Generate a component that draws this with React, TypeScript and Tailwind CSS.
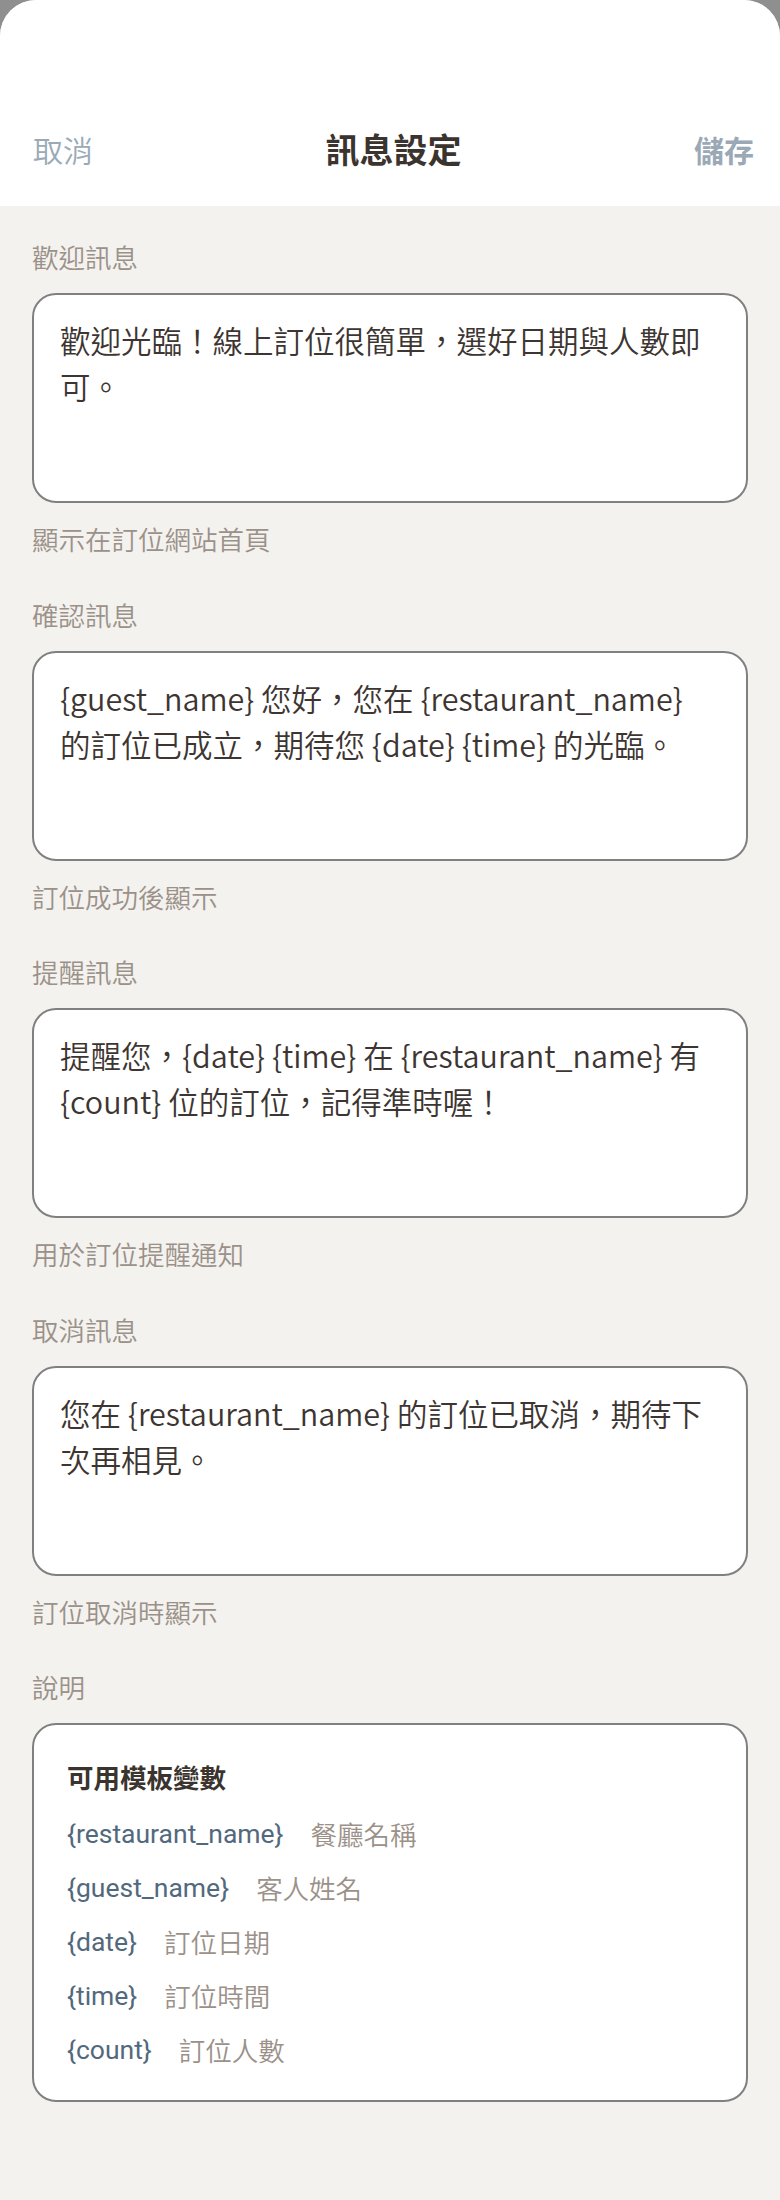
import React from 'react';

const cjk = "font-['Noto_Sans_CJK_TC','Noto_Sans_CJK_SC',sans-serif]";

type Section = {
  label: string;
  text: string;
  hint: string;
};

const sections: Section[] = [
  {
    label: '歡迎訊息',
    text: '歡迎光臨！線上訂位很簡單，選好日期與人數即可。',
    hint: '顯示在訂位網站首頁',
  },
  {
    label: '確認訊息',
    text: '{guest_name} 您好，您在 {restaurant_name} 的訂位已成立，期待您 {date} {time} 的光臨。',
    hint: '訂位成功後顯示',
  },
  {
    label: '提醒訊息',
    text: '提醒您，{date} {time} 在 {restaurant_name} 有 {count} 位的訂位，記得準時喔！',
    hint: '用於訂位提醒通知',
  },
  {
    label: '取消訊息',
    text: '您在 {restaurant_name} 的訂位已取消，期待下次再相見。',
    hint: '訂位取消時顯示',
  },
];

const variables = [
  { key: '{restaurant_name}', desc: '餐廳名稱' },
  { key: '{guest_name}', desc: '客人姓名' },
  { key: '{date}', desc: '訂位日期' },
  { key: '{time}', desc: '訂位時間' },
  { key: '{count}', desc: '訂位人數' },
];

export default function App() {
  return (
    <div className={`min-h-[2200px] bg-[#8f8f8f] font-[350] ${cjk}`}>
      <div className="min-h-[2200px] rounded-t-[36px] bg-[#f3f2ef] overflow-hidden">
        {/* Header */}
        <div className="h-[206px] bg-white grid grid-cols-[1fr_auto_1fr] items-end pb-[37px] pl-[33px] pr-[26px]">
          <button className="justify-self-start text-[30px] leading-[40px] text-[#9aaab6]">取消</button>
          <h1 className="text-[34px] leading-[40px] font-bold text-[#3b332e]">訊息設定</h1>
          <button className="justify-self-end text-[30px] leading-[40px] font-semibold text-[#9aa9b5]">儲存</button>
        </div>

        {/* Body */}
        <div className="px-8 pt-[33px] flex flex-col gap-[39.5px]">
          {sections.map((s) => (
            <div key={s.label} className="flex flex-col">
              <label className="text-[26.5px] leading-[36px] text-[#9b9189]">{s.label}</label>
              <div className="mt-[18px] h-[210px] rounded-[24px] border-2 border-[#808080] bg-white pl-[26px] pr-[26px] pt-[22px] text-[30.5px] leading-[46px] text-[#3d3531]">
                {s.text}
              </div>
              <p className="mt-[18px] text-[26.5px] leading-[36px] text-[#9b9189]">{s.hint}</p>
            </div>
          ))}

          <div className="flex flex-col">
            <label className="text-[26.5px] leading-[36px] text-[#9b9189]">說明</label>
            <div className="mt-[18px] rounded-[24px] border-2 border-[#808080] bg-white px-[33px] pt-[34px] pb-[32px]">
              <h2 className="text-[26.5px] leading-[36px] font-bold text-[#3b332e]">可用模板變數</h2>
              <div className="mt-[21px] flex flex-col gap-[18px]">
                {variables.map((v) => (
                  <div key={v.key} className="flex items-center gap-[27px] text-[26.5px] leading-[36px]">
                    <span className="font-['Roboto','Noto_Sans_CJK_TC',sans-serif] font-normal text-[#52697d]">{v.key}</span>
                    <span className="text-[#9b9189]">{v.desc}</span>
                  </div>
                ))}
              </div>
            </div>
          </div>
        </div>
      </div>
    </div>
  );
}
